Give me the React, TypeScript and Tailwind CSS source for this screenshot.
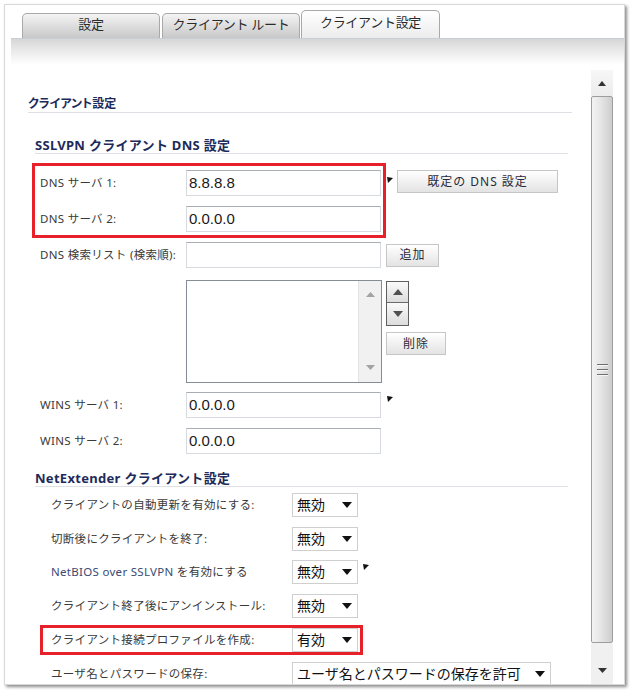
import React from "react";

const F = "font-['Noto_Sans','Noto_Sans_CJK_JP',sans-serif]";

function Mark() {
  return (
    <svg width="6" height="6" viewBox="0 0 6 6" className="shrink-0">
      <polygon points="0,0 6,1 1,6" fill="#111" />
    </svg>
  );
}

function Tri({ up, color = "#222", w = 8, h = 5 }: { up?: boolean; color?: string; w?: number; h?: number }) {
  return (
    <svg width={w} height={h} viewBox={`0 0 ${w} ${h}`} className="shrink-0">
      <polygon points={up ? `0,${h} ${w / 2},0 ${w},${h}` : `0,0 ${w},0 ${w / 2},${h}`} fill={color} />
    </svg>
  );
}

function TextInput({ value = "" }: { value?: string }) {
  return (
    <div className="w-[195px] h-[26px] bg-white border border-[#d6d9dd] border-t-[#a9aeb5] pl-[2px] flex items-center text-[15px] text-[#1a1a1a] font-['Liberation_Sans',sans-serif]">
      {value}
    </div>
  );
}

function Select({ value, w = "w-[66px]" }: { value: string; w?: string }) {
  return (
    <div className={`${w} h-[24px] bg-white border border-[#cfcfcf] flex items-center justify-between pl-[4px] pr-[5px] text-[14px] text-[#111] ${F}`}>
      <span className="leading-none">{value}</span>
      <Tri w={10} h={6} color="#111" />
    </div>
  );
}

function Btn({ children, w }: { children: React.ReactNode; w: string }) {
  return (
    <div className={`${w} h-[23px] border border-[#c6c6c6] bg-linear-to-b from-[#ffffff] to-[#e3e3e3] flex items-center justify-center text-[12px] tracking-[1px] text-[#2a2a3a] ${F}`}>
      {children}
    </div>
  );
}

function Label({ children, w, pl }: { children: React.ReactNode; w: string; pl: string }) {
  return (
    <div className={`${w} ${pl} shrink-0 text-[11.5px] tracking-[0.3px] text-[#3a3a3a] whitespace-nowrap ${F}`}>
      {children}
    </div>
  );
}

function Heading({ children, size = "text-[13px] tracking-[0.3px]" }: { children: React.ReactNode; size?: string }) {
  return (
    <div className={`h-[17px] leading-[16px] border-b border-[#dde0e4] ${size} font-bold text-[#1d2b5a] whitespace-nowrap ${F}`}>
      {children}
    </div>
  );
}

export default function App() {
  const tabBase = `h-[25px] w-[138px] rounded-t-[5px] border border-b-0 border-[#a9a9a9] flex items-center justify-center pb-[3px] text-[13px] tracking-[-0.3px] text-[#2b2b2b] ${F}`;
  return (
    <div className="w-[634px] h-[694px] bg-white overflow-hidden">
      <div className="ml-[4px] mt-[4px] w-[621px] h-[681px] border border-[#d9d9d9] shadow-[2px_2px_3px_rgba(0,0,0,0.45)] flex flex-col bg-white">
        {/* tabs */}
        <div className="h-[33px] pt-[5px] pl-[17px] flex items-end">
          <div className={`${tabBase} bg-linear-to-b from-[#f4f4f4] to-[#c8c8c8]`}>設定</div>
          <div className={`${tabBase} ml-[2px] bg-linear-to-b from-[#f4f4f4] to-[#c8c8c8]`}>クライアント ルート</div>
          <div className={`${tabBase} ml-[1px] h-[28px] w-[139px] bg-linear-to-b from-[#ffffff] to-[#ececec]`}>クライアント設定</div>
        </div>
        <div className="ml-[6px] h-[27px] border-t border-[#c9ced6] bg-linear-to-b from-[#d6d6d6] via-[#ececec] to-white" />

        {/* body */}
        <div className="flex flex-1 min-h-0">
          <div className="w-[586px] overflow-hidden pl-[23px] pr-[19px] pt-[31px]">
            <Heading size="text-[12px] [font-feature-settings:'palt']">クライアント設定</Heading>
            <div className="pl-[7px] pr-[4px]">
              <div className="mt-[24px]">
                <Heading>SSLVPN クライアント DNS 設定</Heading>
              </div>

              <div className="mt-[9px] -ml-[3px] flex items-start">
                <div className="w-[354px] border-[3px] border-[#e8202a] pt-[4px] pb-[3px] flex flex-col gap-[10px]">
                  <div className="flex items-center">
                    <Label w="w-[151px]" pl="pl-[5px]">DNS サーバ 1:</Label>
                    <TextInput value="8.8.8.8" />
                  </div>
                  <div className="flex items-center">
                    <Label w="w-[151px]" pl="pl-[5px]">DNS サーバ 2:</Label>
                    <TextInput value="0.0.0.0" />
                  </div>
                </div>
                <div className="ml-[1px] mt-[14px]">
                  <Mark />
                </div>
                <div className="ml-[4px] mt-[7px]">
                  <Btn w="w-[161px]">既定の DNS 設定</Btn>
                </div>
              </div>

              <div className="mt-[4px] flex items-center">
                <Label w="w-[151px]" pl="pl-[5px]">DNS 検索リスト (検索順):</Label>
                <TextInput />
                <div className="ml-[5px]">
                  <Btn w="w-[53px]">追加</Btn>
                </div>
              </div>

              <div className="mt-[12px] pl-[151px] flex items-start">
                <div className="w-[196px] h-[103px] border border-[#868c96] bg-white flex justify-end">
                  <div className="w-[23px] h-full bg-[#f1f1f1] border-l border-[#e4e4e4] flex flex-col items-center justify-between pt-[11px] pb-[12px]">
                    <Tri up w={9} h={5} color="#a3a3a3" />
                    <Tri w={9} h={5} color="#a3a3a3" />
                  </div>
                </div>
                <div className="ml-[4px] mt-[1px] flex flex-col">
                  <div className="w-[23px] border border-[#5f5f5f] flex flex-col">
                    <div className="h-[21px] bg-linear-to-b from-[#fafafa] to-[#dcdcdc] border-b border-[#6a6a6a] flex items-center justify-center">
                      <Tri up w={10} h={6} color="#505050" />
                    </div>
                    <div className="h-[22px] bg-linear-to-b from-[#fafafa] to-[#dcdcdc] flex items-center justify-center">
                      <Tri w={10} h={6} color="#505050" />
                    </div>
                  </div>
                  <div className="mt-[6px]">
                    <Btn w="w-[60px]">削除</Btn>
                  </div>
                </div>
              </div>

              <div className="mt-[9px] flex items-start">
                <div className="flex items-center">
                  <Label w="w-[151px]" pl="pl-[5px]">WINS サーバ 1:</Label>
                  <TextInput value="0.0.0.0" />
                </div>
                <div className="ml-[6px] mt-[4px]">
                  <Mark />
                </div>
              </div>
              <div className="mt-[10px] flex items-center">
                <Label w="w-[151px]" pl="pl-[5px]">WINS サーバ 2:</Label>
                <TextInput value="0.0.0.0" />
              </div>

              <div className="mt-[16px]">
                <Heading>NetExtender クライアント設定</Heading>
              </div>

              <div className="mt-[6px] flex items-center">
                <Label w="w-[257px]" pl="pl-[16px]">クライアントの自動更新を有効にする:</Label>
                <Select value="無効" />
              </div>
              <div className="mt-[10px] flex items-center">
                <Label w="w-[257px]" pl="pl-[16px]">切断後にクライアントを終了:</Label>
                <Select value="無効" />
              </div>
              <div className="mt-[9px] flex items-start">
                <div className="flex items-center">
                  <Label w="w-[257px]" pl="pl-[16px]">
                    <span className="text-[#3b4a72]">NetBIOS over SSLVPN</span> を有効にする
                  </Label>
                  <Select value="無効" />
                </div>
                <div className="ml-[5px] mt-[4px]">
                  <Mark />
                </div>
              </div>
              <div className="mt-[10px] flex items-center">
                <Label w="w-[257px]" pl="pl-[16px]">クライアント終了後にアンインストール:</Label>
                <Select value="無効" />
              </div>
              <div className="mt-[7px] ml-[5px] w-[323px] border-[3px] border-[#e8202a] flex items-center">
                <Label w="w-[249px]" pl="pl-[8px]">クライアント接続プロファイルを作成:</Label>
                <Select value="有効" />
              </div>
              <div className="mt-[7px] flex items-center">
                <Label w="w-[257px]" pl="pl-[16px]">ユーザ名とパスワードの保存:</Label>
                <Select value="ユーザ名とパスワードの保存を許可" w="w-[259px]" />
              </div>
            </div>
          </div>

          {/* scrollbar */}
          <div className="w-[22px] mt-[5px] flex flex-col">
            <div className="h-[26px] bg-linear-to-b from-[#f7f7f7] to-[#ececec] flex items-center justify-center pt-[1px]">
              <Tri up w={8} h={5} color="#333" />
            </div>
            <div className="flex-1 rounded-[2px] border border-[#9d9d9d] bg-linear-to-r from-[#f3f3f3] via-[#e3e3e3] to-[#cdcdcd] flex flex-col items-center justify-center gap-[3px]">
              <div className="w-[11px] h-[2px] border-t border-[#6f6f6f] border-b border-b-[#f6f6f6]" />
              <div className="w-[11px] h-[2px] border-t border-[#6f6f6f] border-b border-b-[#f6f6f6]" />
              <div className="w-[11px] h-[2px] border-t border-[#6f6f6f] border-b border-b-[#f6f6f6]" />
            </div>
            <div className="h-[41px] bg-[#f0f0f0] flex items-end justify-center pb-[11px]">
              <Tri w={9} h={5} color="#333" />
            </div>
          </div>
          <div className="w-[11px]" />
        </div>
      </div>
    </div>
  );
}
